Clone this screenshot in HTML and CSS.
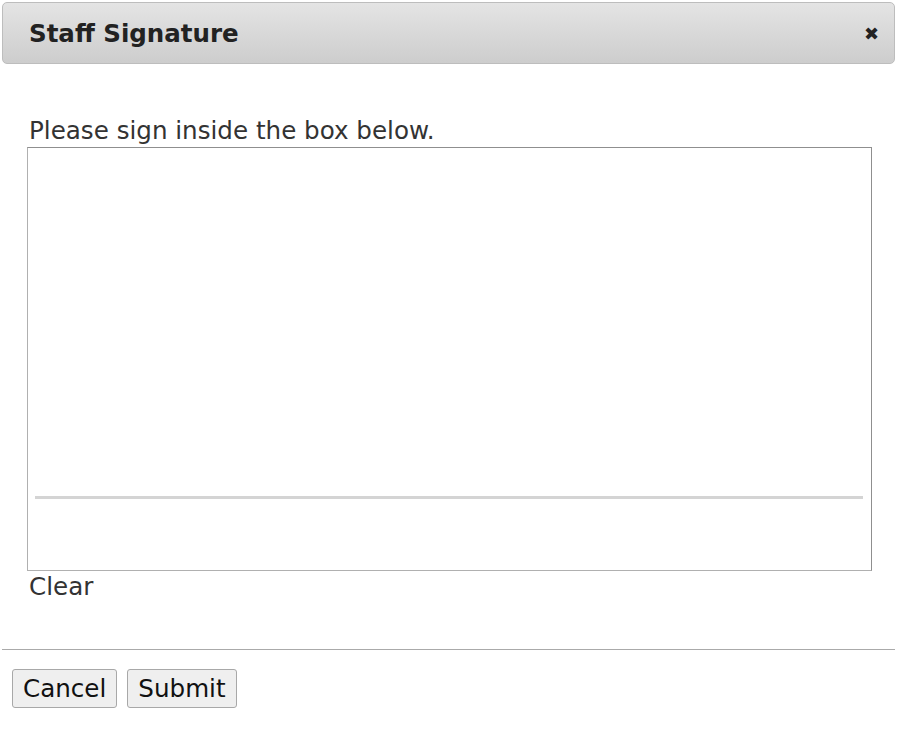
FILE: index.html
```html
<!DOCTYPE html>
<html>
<head>
<meta charset="utf-8">
<link rel="stylesheet" href="styles.css">
</head>
<body>
<div class="dialog">
  <div class="titlebar">
    <span class="title">Staff Signature</span>
    <span class="close">&#x2716;</span>
  </div>
  <div class="content">
    <div class="prompt">Please sign inside the box below.</div>
    <div class="sigbox">
      <div class="sigline"></div>
    </div>
    <div class="clear">Clear</div>
  </div>
  <div class="buttonpane">
    <button class="btn">Cancel</button>
    <button class="btn">Submit</button>
  </div>
</div>
</body>
</html>
```
FILE: styles.css
```css
html, body {
  margin: 0;
  padding: 0;
  background: #fff;
}
body {
  font-family: "DejaVu Sans", Verdana, sans-serif;
  color: #222;
}
.dialog {
  width: 897px;
  padding: 2px 2px 0 2px;
  box-sizing: border-box;
}
.titlebar {
  height: 62px;
  box-sizing: border-box;
  border: 1px solid #bdbdbd;
  border-radius: 5px;
  background: linear-gradient(#e4e4e4, #cdcdcd);
  display: flex;
  align-items: center;
  justify-content: space-between;
  padding: 0 15px 0 26px;
}
.title {
  font-weight: bold;
  font-size: 24.5px;
  color: #222;
}
.close {
  font-size: 18px;
  color: #222;
}
.content {
  padding: 53px 0 0 25px;
}
.prompt {
  font-size: 24.6px;
  line-height: 28px;
  padding-left: 2px;
  margin-bottom: 2px;
  color: #333;
}
.sigbox {
  width: 828px;
  height: 351px;
  border: 1px solid #8f8f8f;
  border-left-color: #b0b0b0;
  border-bottom-color: #b0b0b0;
  display: flex;
  flex-direction: column;
  justify-content: flex-end;
  padding: 0 8px 71px 7px;
}
.sigline {
  height: 3px;
  background: #d4d4d4;
}
.clear {
  font-size: 24.6px;
  line-height: 28px;
  margin-top: 2px;
  padding-left: 2px;
  color: #333;
}
.buttonpane {
  margin-top: 48px;
  border-top: 1px solid #aaa;
  padding: 19px 0 0 10px;
  display: flex;
  gap: 10px;
}
.btn {
  font-family: "DejaVu Sans", Verdana, sans-serif;
  font-size: 24.6px;
  color: #111;
  background: #efefef;
  border: 1px solid #a8a8a8;
  border-radius: 3px;
  padding: 0 10px;
  height: 39px;
}
```
